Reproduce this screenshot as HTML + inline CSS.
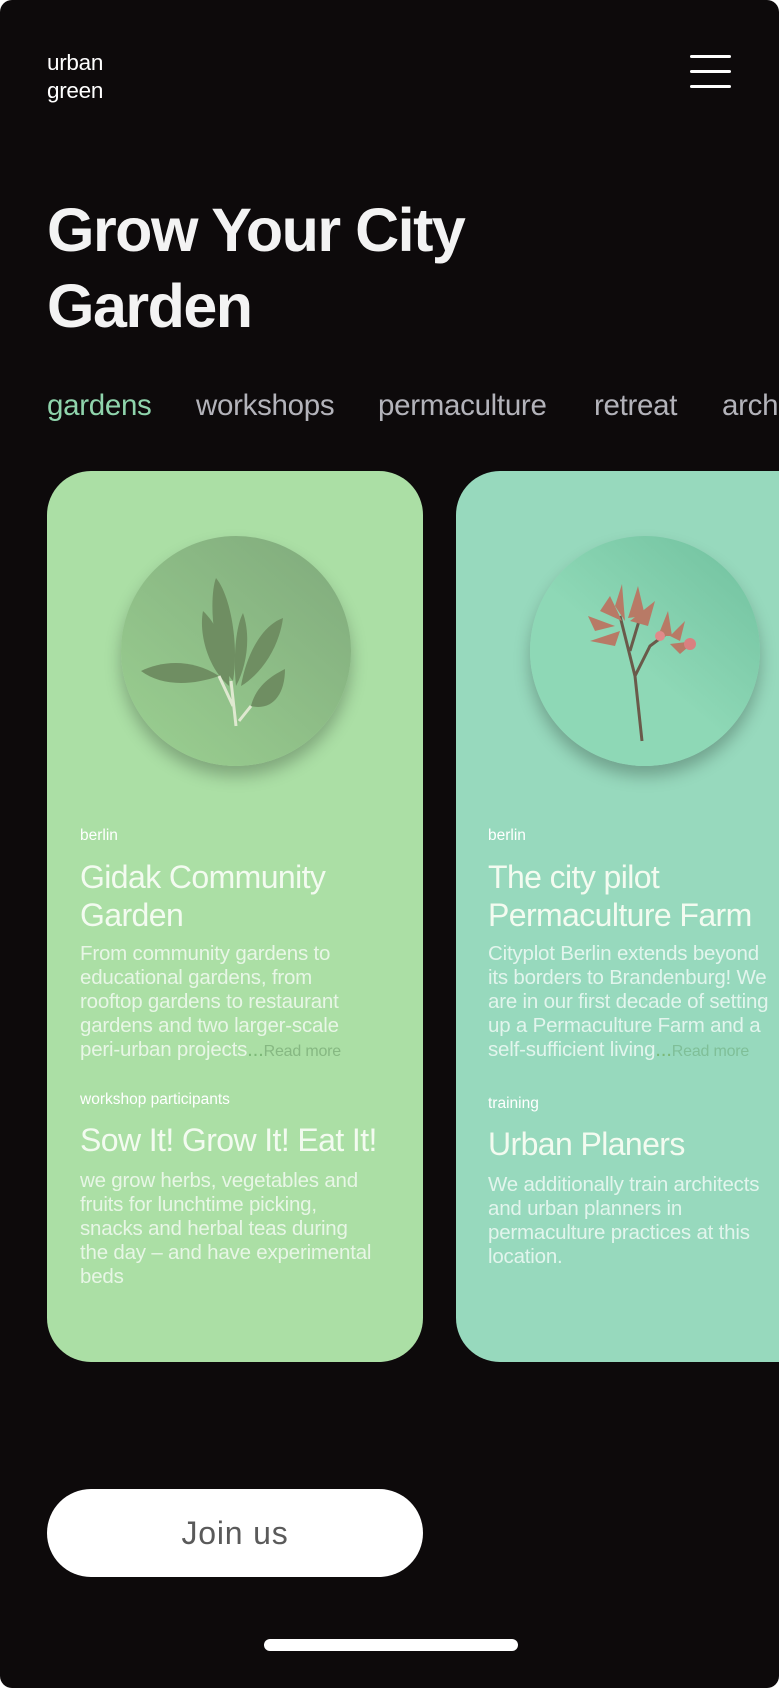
<!DOCTYPE html>
<html><head><meta charset="utf-8"><style>
*{margin:0;padding:0;box-sizing:border-box}
html,body{width:780px;height:1688px;background:#fff;overflow:hidden}
body{font-family:"Liberation Sans",sans-serif}
#app{position:absolute;left:0;top:0;width:779px;height:1688px;background:#0d0a0b;border-radius:12px;overflow:hidden}
.abs{position:absolute}
.logo{left:47px;top:49px;color:#fff;font-size:22.5px;line-height:28px;letter-spacing:-0.3px}
.ham{left:690px;width:41px;height:3px;background:#fff;border-radius:2px}
.title{left:47px;top:192px;color:#f3f3f3;font-size:61px;font-weight:bold;line-height:76px;letter-spacing:-1.5px}
.tab{top:389px;font-size:29.5px;color:#b3b3ba;letter-spacing:-0.3px;white-space:nowrap}
.card{top:471px;width:376px;height:891px;border-radius:44px}
.circ{width:230px;height:230px;border-radius:50%;box-shadow:0 10px 16px rgba(0,0,0,0.25)}
.lab{font-size:15.5px;color:#fff;white-space:nowrap}
.h{font-size:32px;color:#f3fbf0;line-height:38px;letter-spacing:-0.6px;white-space:nowrap}
.p{font-size:20.5px;color:rgba(255,255,255,0.72);line-height:24px;white-space:nowrap;letter-spacing:-0.2px}
.rm{font-size:16px;color:#86b882}
</style></head><body><div id="app">
<div class="abs logo">urban<br>green</div>
<div class="abs ham" style="top:55px"></div>
<div class="abs ham" style="top:70px"></div>
<div class="abs ham" style="top:85px"></div>
<div class="abs title">Grow Your City<br>Garden</div>
<div class="abs tab" style="left:47px;color:#8fd4ac">gardens</div>
<div class="abs tab" style="left:196px">workshops</div>
<div class="abs tab" style="left:378px">permaculture</div>
<div class="abs tab" style="left:594px">retreat</div>
<div class="abs tab" style="left:722px">archi</div>

<div class="abs card" style="left:47px;background:#abdfa5">
 <div class="abs circ" style="left:74px;top:65px;background:linear-gradient(40deg,#9bd091,#80aa7c)">
  <svg width="230" height="230" viewBox="0 0 230 230">
   <g fill="#6f8e62">
    <path d="M112 145 C90 120 88 60 95 42 C110 60 118 110 112 145Z"/>
    <path d="M108 150 C85 130 78 95 82 75 C98 90 110 120 108 150Z"/>
    <path d="M115 150 C112 120 115 90 122 77 C130 100 126 130 115 150Z"/>
    <path d="M120 150 C125 120 140 90 162 82 C158 112 140 138 120 150Z"/>
    <path d="M130 170 C135 150 150 140 164 133 C164 160 150 175 130 170Z"/>
    <path d="M20 135 C40 125 70 122 98 140 C70 150 40 150 20 135Z"/>
   </g>
   <path d="M110 145 L115 190 M98 140 L112 170 M130 170 L118 185" stroke="#dfe8d0" stroke-width="3" fill="none"/>
  </svg>
 </div>
 <div class="abs lab" style="left:33px;top:356px">berlin</div>
 <div class="abs h" style="left:33px;top:387px">Gidak Community<br>Garden</div>
 <div class="abs p" style="left:33px;top:471px">From community gardens to<br>educational gardens, from<br>rooftop gardens to restaurant<br>gardens and two larger-scale<br>peri-urban projects<span style="color:#7cb877">...</span><span class="rm">Read more</span></div>
 <div class="abs lab" style="left:33px;top:620px">workshop participants</div>
 <div class="abs h" style="left:33px;top:650px">Sow It! Grow It! Eat It!</div>
 <div class="abs p" style="left:33px;top:698px">we grow herbs, vegetables and<br>fruits for lunchtime picking,<br>snacks and herbal teas during<br>the day – and have experimental<br>beds</div>
</div>

<div class="abs card" style="left:456px;width:400px;background:#97d9bd">
 <div class="abs circ" style="left:74px;top:65px;background:linear-gradient(220deg,#70c09e,#8ed8b6 55%)">
  <svg width="230" height="230" viewBox="0 0 230 230">
   <path d="M112 205 L105 140 L90 80 M105 140 L120 110 L140 95 M100 115 L112 75" stroke="#6a5a4a" stroke-width="3" fill="none"/>
   <g fill="#b87a66">
    <path d="M70 75 L92 85 L80 60Z"/><path d="M85 70 L95 85 L92 48Z"/><path d="M98 82 L108 50 L115 80Z"/>
    <path d="M100 85 L125 65 L118 90Z"/><path d="M58 80 L85 90 L65 95Z"/><path d="M60 105 L90 95 L85 110Z"/>
    <path d="M128 100 L138 75 L142 100Z"/><path d="M140 100 L155 85 L150 105Z"/><path d="M140 108 L165 105 L150 118Z"/>
    <circle cx="160" cy="108" r="6" fill="#d98080"/><circle cx="130" cy="100" r="5" fill="#e08a8a"/>
   </g>
  </svg>
 </div>
 <div class="abs lab" style="left:32px;top:356px">berlin</div>
 <div class="abs h" style="left:32px;top:387px">The city pilot<br>Permaculture Farm</div>
 <div class="abs p" style="left:32px;top:471px">Cityplot Berlin extends beyond<br>its borders to Brandenburg! We<br>are in our first decade of setting<br>up a Permaculture Farm and a<br>self-sufficient living<span style="color:#7cb877">...</span><span class="rm" style="color:#7fbf98">Read more</span></div>
 <div class="abs lab" style="left:32px;top:624px">training</div>
 <div class="abs h" style="left:32px;top:654px">Urban Planers</div>
 <div class="abs p" style="left:32px;top:702px">We additionally train architects<br>and urban planners in<br>permaculture practices at this<br>location.</div>
</div>

<div class="abs" style="left:47px;top:1489px;width:376px;height:88px;background:#fff;border-radius:44px;text-align:center;line-height:88px;font-size:32px;color:#5a5a5a;letter-spacing:0.8px">Join us</div>
<div class="abs" style="left:264px;top:1639px;width:254px;height:12px;background:#fff;border-radius:6px"></div>
</div></body></html>
